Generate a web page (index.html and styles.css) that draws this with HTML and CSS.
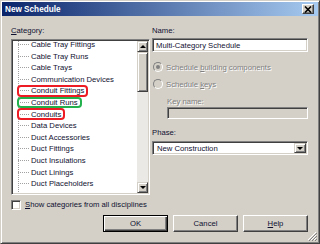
FILE: index.html
```html
<!DOCTYPE html>
<html lang="en">
<head>
<meta charset="UTF-8">
<title>New Schedule</title>
<link rel="stylesheet" href="styles.css">
</head>
<body>
<div class="window">
  <div class="titlebar">
    <span class="title">New Schedule</span>
    <span class="close">
      <svg width="8" height="7" viewBox="0 0 8 7"><path d="M1 0.5 L7 6.5 M7 0.5 L1 6.5" stroke="#000" stroke-width="1.6"/></svg>
    </span>
  </div>

  <div class="body">
    <!-- left: category tree -->
    <div class="col-left">
      <div class="label"><u>C</u>ategory:</div>
      <div class="listbox">
        <ul class="tree">
          <li><span class="branch"></span>Cable Tray Fittings</li>
          <li><span class="branch"></span>Cable Tray Runs</li>
          <li><span class="branch"></span>Cable Trays</li>
          <li><span class="branch"></span>Communication Devices</li>
          <li class="hl-red"><span class="branch"></span>Conduit Fittings</li>
          <li class="hl-green"><span class="branch"></span>Conduit Runs</li>
          <li class="hl-red"><span class="branch"></span>Conduits</li>
          <li><span class="branch"></span>Data Devices</li>
          <li><span class="branch"></span>Duct Accessories</li>
          <li><span class="branch"></span>Duct Fittings</li>
          <li><span class="branch"></span>Duct Insulations</li>
          <li><span class="branch"></span>Duct Linings</li>
          <li><span class="branch"></span>Duct Placeholders</li>
          <li><span class="branch"></span>Duct Systems</li>
        </ul>
        <div class="vscroll">
          <div class="sbtn"><span class="arrow-up"></span></div>
          <div class="track"><div class="thumb"></div></div>
          <div class="sbtn"><span class="arrow-down"></span></div>
        </div>
      </div>
      <div class="check"><span class="checkbox"></span><span class="txt"><u>S</u>how categories from all disciplines</span></div>
    </div>

    <!-- right: name / type / phase -->
    <div class="col-right">
      <div class="label">Name:</div>
      <div class="field">Multi-Category Schedule</div>
      <div class="radio-row first disabled"><span class="radio checked"></span><span class="txt">Schedule <u>b</u>uilding components</span></div>
      <div class="radio-row second disabled"><span class="radio"></span><span class="txt">Schedule <u>k</u>eys</span></div>
      <div class="label keyname disabled">Key name:</div>
      <div class="field keyfield"></div>
      <div class="label phase">Phase:</div>
      <div class="combo">
        <span class="combo-text">New Construction</span>
        <span class="combo-btn"><span class="arrow-down"></span></span>
      </div>
    </div>
  </div>

  <div class="buttons">
    <button class="btn default">OK</button>
    <button class="btn">Cancel</button>
    <button class="btn"><u>H</u>elp</button>
  </div>

  <svg class="grip" width="10" height="10" viewBox="0 0 10 10">
    <path d="M9 1 L1 9 M9 4 L4 9 M9 7 L7 9" stroke="#fff" stroke-width="1"/>
    <path d="M10 2 L2 10 M10 5 L5 10 M10 8 L8 10" stroke="#808080" stroke-width="1"/>
  </svg>
</div>
</body>
</html>
```

FILE: styles.css
```css
* { box-sizing:border-box; margin:0; padding:0; }
body {
  background:#d4d0c8; font-family:"Liberation Sans",Arial,sans-serif;
  font-size:7.7px; color:#101030;
}
u { text-decoration:underline; text-underline-offset:1px; }
.txt { white-space:nowrap; }

.window {
  position:relative; width:320px; height:244px; background:#d4d0c8;
  border:1px solid; border-color:#d4d0c8 #404040 #404040 #d4d0c8;
  box-shadow:inset 1px 1px #fff, inset -1px -1px #808080; padding:1px;
}
.titlebar {
  height:14px; display:flex; align-items:center; justify-content:space-between;
  padding:0 4px 0 3px; background:linear-gradient(to right,#0a246a,#a6caf0);
}
.title { color:#fff; font-weight:bold; font-size:8.2px; }
.close {
  width:12px; height:10px; display:flex; align-items:center; justify-content:center;
  background:#d4d0c8; border:1px solid; border-color:#fff #404040 #404040 #fff;
  box-shadow:inset -1px -1px #808080;
}

/* 3d edges */
.listbox, .field, .combo, .checkbox {
  border:1px solid; border-color:#808080 #fff #fff #808080;
  box-shadow:inset 1px 1px #404040, inset -1px -1px #d4d0c8;
}
.sbtn, .thumb, .combo-btn {
  background:#d4d0c8; border:1px solid; border-color:#d4d0c8 #404040 #404040 #d4d0c8;
  box-shadow:inset 1px 1px #fff, inset -1px -1px #808080;
}

.body {
  display:grid; grid-template-columns:139px 156px; column-gap:2px;
  padding:9px 0 0 9px;
}
.label { line-height:12px; height:12px; }
.col-left .label { margin-bottom:2px; }

.listbox { height:156px; display:flex; background:#fff; padding:1px; }
.tree {
  flex:1; overflow:hidden; list-style:none;
  background:repeating-linear-gradient(to bottom,#a0a0a0 0 1px,transparent 1px 2px) 5px 0/1px 100% no-repeat;
}
.tree li {
  display:flex; align-items:center; height:11.6px; width:fit-content;
  margin-left:4px; padding:0 4px 0 1px; border-radius:4px; white-space:nowrap;
}
.tree li:first-child { margin-top:-2.3px; }
.branch {
  width:11px; height:1px; margin-right:2px;
  background:repeating-linear-gradient(to right,#a0a0a0 0 1px,transparent 1px 2px);
}
.hl-red { outline:2px solid #ed1c24; outline-offset:-2px; }
.hl-green { outline:2px solid #22b14c; outline-offset:-2px; }

.vscroll { width:11px; display:flex; flex-direction:column; background:#ebe9e5; }
.sbtn { height:11px; display:flex; align-items:center; justify-content:center; }
.track { flex:1; }
.thumb { height:40px; }
.arrow-up { border-left:3px solid transparent; border-right:3px solid transparent; border-bottom:3px solid #000; }
.arrow-down { border-left:3px solid transparent; border-right:3px solid transparent; border-top:3px solid #000; }

.check { margin-top:4px; display:flex; align-items:center; gap:4px; line-height:12px; }
.checkbox { width:10px; height:10px; background:#fff; }

.field {
  height:14px; margin-top:1px; background:#fff; padding:0 3px;
  display:flex; align-items:center;
}
.radio-row { display:flex; align-items:center; gap:3px; height:12px; }
.radio-row.first { margin-top:9px; }
.radio-row.second { margin-top:5px; }
.radio {
  width:10px; height:10px; margin-left:1px; border-radius:50%; background:#d4d0c8;
  border:1px solid; border-color:#808080 #fff #fff #808080;
  display:flex; align-items:center; justify-content:center;
}
.radio.checked::after { content:""; width:4px; height:4px; border-radius:50%; background:#808080; }
.disabled { color:#808080; text-shadow:1px 1px #fff; }
.label.keyname { margin-top:7px; padding-left:15px; line-height:10px; height:10px; }
.field.keyfield { margin:0 0 0 15px; height:12px; background:#d4d0c8; }
.label.phase { margin-top:8px; }
.combo {
  height:14px; margin-top:2px; background:#fff; padding:1px;
  display:flex; align-items:center;
}
.combo-text { flex:1; padding-left:3px; }
.combo-btn { width:12px; height:100%; display:flex; align-items:center; justify-content:center; }

.buttons { display:flex; justify-content:flex-end; gap:5px; padding-right:10px; margin-top:4px; }
.btn {
  width:65px; height:17px; font:inherit; color:inherit; background:#d4d0c8;
  border:1px solid; border-color:#fff #404040 #404040 #fff;
  box-shadow:inset -1px -1px #808080;
}
.btn.default {
  border-color:#000;
  box-shadow:inset 1px 1px #fff, inset -1px -1px #404040, inset -2px -2px #808080;
}
.grip { position:absolute; right:2px; bottom:2px; }
```
